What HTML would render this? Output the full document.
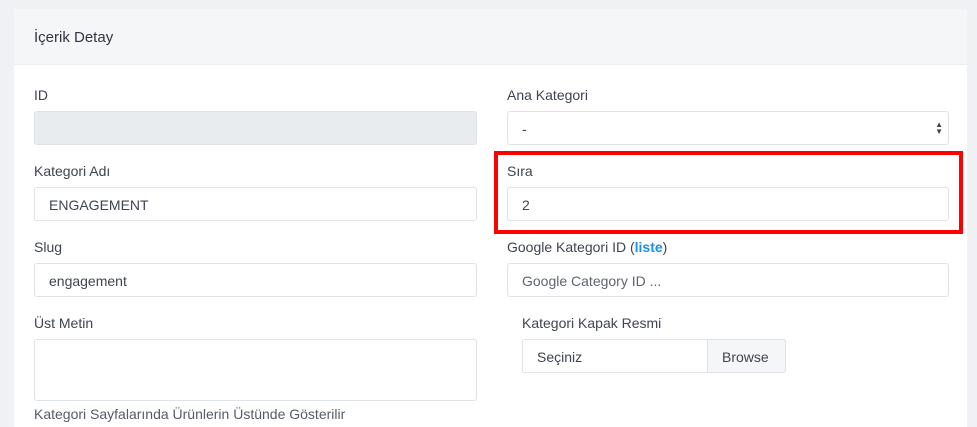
<!DOCTYPE html>
<html><head><meta charset="utf-8"><style>
*{box-sizing:border-box;margin:0;padding:0}
html,body{width:977px;height:427px;overflow:hidden}
body{background:#f0f1f4;font-family:"Liberation Sans",sans-serif;color:#3e4450;position:relative}
.card{position:absolute;left:14px;top:9px;width:953px;height:418px;background:#fff}
.hd{position:absolute;left:14px;top:9px;width:953px;height:56px;background:#f5f6f8;border-bottom:1px solid #eceef1}
.hd span{position:absolute;left:20px;top:20px;font-size:15px;color:#2f3440}
.lb{position:absolute;font-size:14px;color:#3e4450}
.in{position:absolute;height:34px;border:1px solid #dfe2e6;border-radius:3px;background:#fff;font-size:14px;padding:9px 14px;color:#3e4450}
.red{position:absolute;left:494px;top:151px;width:469px;height:83px;border:4px solid #f00}
</style></head><body>
<div class="card"></div>
<div class="hd"><span>İçerik Detay</span></div>
<div class="lb" style="left:34px;top:87px">ID</div>
<div class="in" style="left:34px;top:111px;width:443px;background:#e9ecef"></div>
<div class="lb" style="left:507px;top:87px">Ana Kategori</div>
<div class="in" style="left:507px;top:111px;width:442px">-<span style="position:absolute;right:5px;top:9px;font-size:8px;line-height:7px">▲<br>▼</span></div>
<div class="lb" style="left:34px;top:163px">Kategori Adı</div>
<div class="in" style="left:34px;top:187px;width:443px">ENGAGEMENT</div>
<div class="red"></div>
<div class="lb" style="left:507px;top:163px">Sıra</div>
<div class="in" style="left:507px;top:187px;width:442px">2</div>
<div class="lb" style="left:34px;top:239px">Slug</div>
<div class="in" style="left:34px;top:263px;width:443px">engagement</div>
<div class="lb" style="left:507px;top:239px">Google Kategori ID (<span style="color:#1e8fe1;font-weight:bold">liste</span>)</div>
<div class="in" style="left:507px;top:263px;width:442px;color:#5f6670">Google Category ID ...</div>
<div class="lb" style="left:34px;top:315px">Üst Metin</div>
<div class="in" style="left:34px;top:339px;width:443px;height:62px"></div>
<div class="lb" style="left:522px;top:315px">Kategori Kapak Resmi</div>
<div class="in" style="left:522px;top:339px;width:264px">Seçiniz</div>
<div class="in" style="left:707px;top:339px;width:79px;background:#f5f6f8;border-radius:0 3px 3px 0">Browse</div>
<div class="lb" style="left:34px;top:406px;font-size:14px;color:#555c66">Kategori Sayfalarında Ürünlerin Üstünde Gösterilir</div>
</body></html>
